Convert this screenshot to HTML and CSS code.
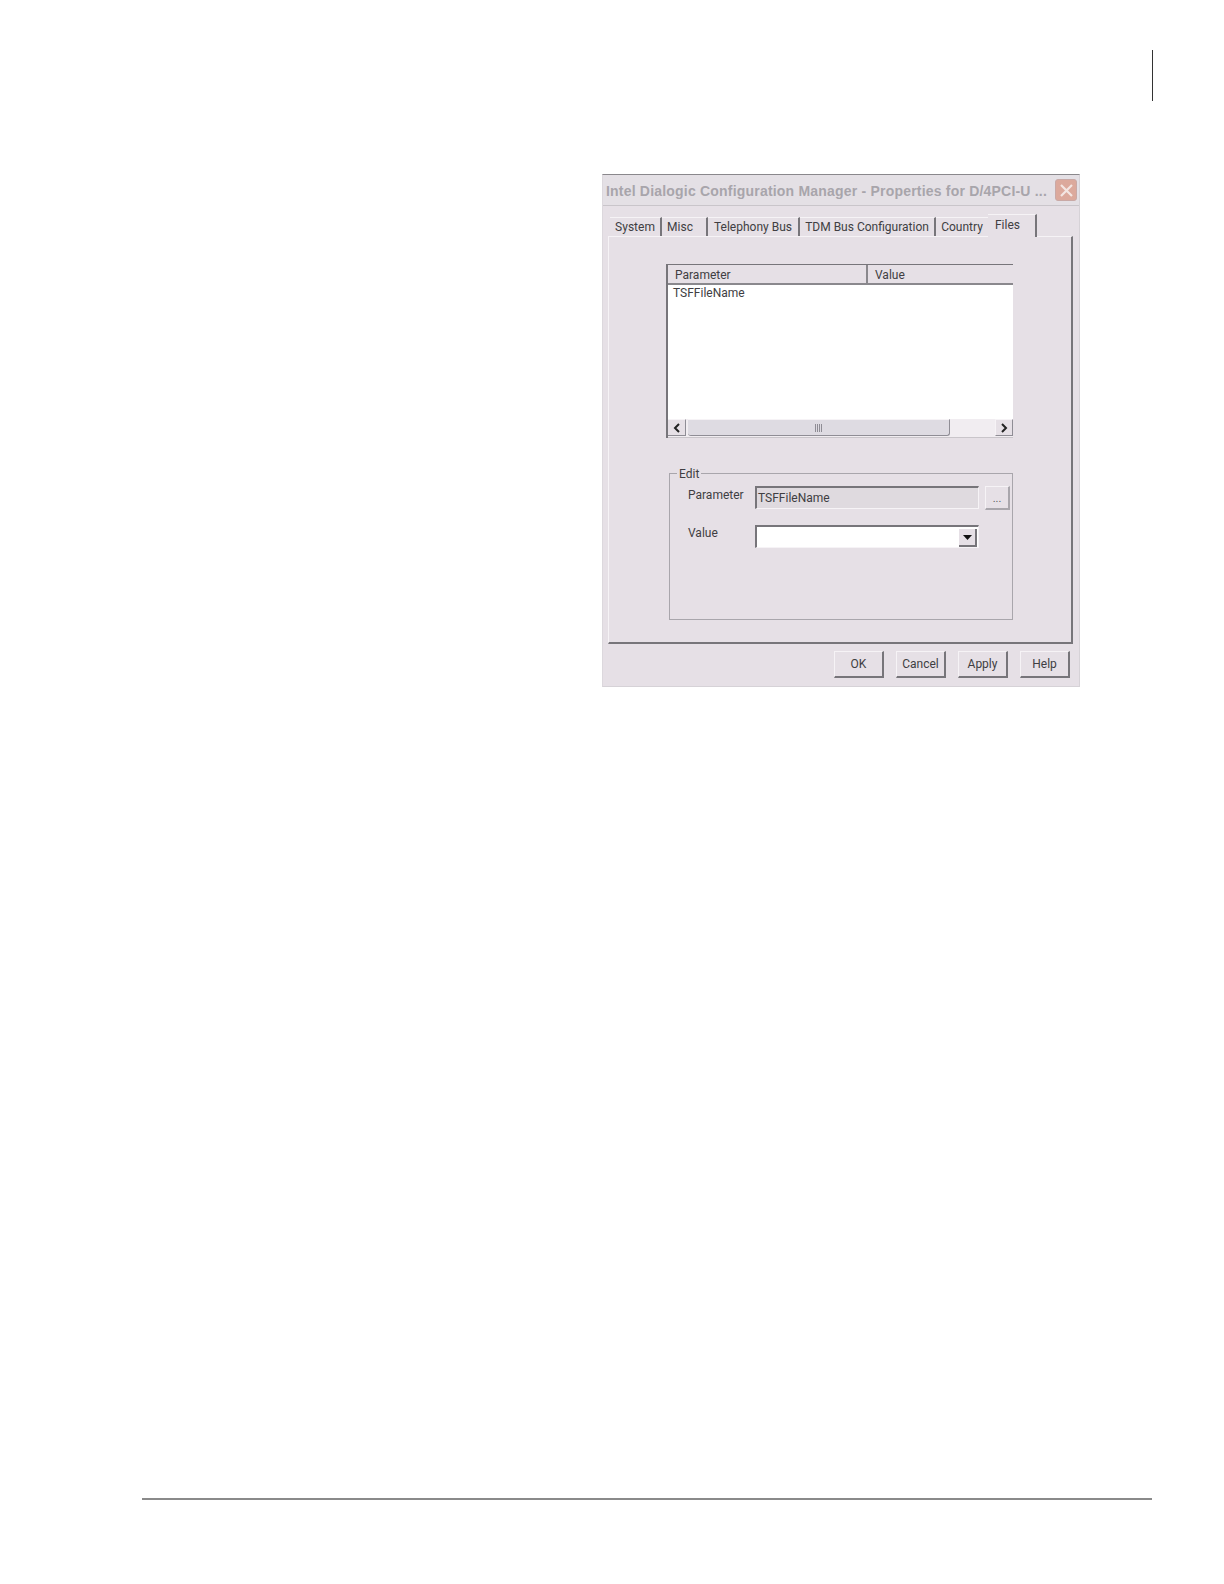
FILE: index.html
```html
<!DOCTYPE html>
<html lang="en">
<head>
    <meta charset="UTF-8">
    <meta name="viewport" content="width=device-width, initial-scale=1.0">
    <title>Properties</title>
    <link rel="stylesheet" href="styles.css">
</head>
<body>

    <div class="page-mark"></div>

    <div class="dialog">
        <div class="titlebar">
            <span class="title">Intel Dialogic Configuration Manager - Properties for D/4PCI-U ...</span>
            <div class="close">
                <svg width="15" height="15" viewBox="0 0 15 15"><path d="M2 2L13 13M13 2L2 13" stroke="#f3e6e2" stroke-width="2.2" fill="none"/></svg>
            </div>
        </div>

        <div class="tabs">
            <div class="tab tab-system">System</div>
            <div class="tab tab-misc">Misc</div>
            <div class="tab tab-bus">Telephony Bus</div>
            <div class="tab tab-tdm">TDM Bus Configuration</div>
            <div class="tab tab-country">Country</div>
            <div class="tab-active">Files</div>
        </div>

        <div class="panel">
            <div class="list">
                <div class="list-head">
                    <div class="col col-param">Parameter</div>
                    <div class="col col-value">Value</div>
                </div>
                <div class="list-body">TSFFileName</div>
                <div class="scrollbar">
                    <div class="scroll-btn">
                        <svg width="10" height="10" viewBox="0 0 10 10"><path d="M7 1L3 5L7 9" stroke="#222" stroke-width="2" fill="none"/></svg>
                    </div>
                    <div class="scroll-thumb">
                        <svg width="9" height="8" viewBox="0 0 9 8"><path d="M1.5 0V8M3.5 0V8M5.5 0V8M7.5 0V8" stroke="#8f8d95" stroke-width="1" fill="none"/></svg>
                    </div>
                    <div class="scroll-btn scroll-right">
                        <svg width="10" height="10" viewBox="0 0 10 10"><path d="M3 1L7 5L3 9" stroke="#222" stroke-width="2" fill="none"/></svg>
                    </div>
                </div>
            </div>

            <div class="group">
                <div class="legend">Edit</div>
                <div class="row">
                    <span class="label label-param">Parameter</span>
                    <div class="field field-grey">TSFFileName</div>
                    <div class="dots">...</div>
                </div>
                <div class="row row-value">
                    <span class="label label-value">Value</span>
                    <div class="field field-white">
                        <div class="drop">
                            <svg width="9" height="5" viewBox="0 0 9 5"><path d="M0 0H9L4.5 5Z" fill="#111"/></svg>
                        </div>
                    </div>
                </div>
            </div>
        </div>

        <div class="buttons">
            <div class="button">OK</div>
            <div class="button">Cancel</div>
            <div class="button">Apply</div>
            <div class="button">Help</div>
        </div>
    </div>

    <div class="page-rule"></div>

</body>
</html>
```

FILE: styles.css
```css
* {
    margin: 0;
    padding: 0;
    box-sizing: border-box;
}

body {
    font-family: Roboto, "Liberation Sans", Arial, sans-serif;
    background-color: #fff;
    color: #333;
    height: 1584px;
    overflow: hidden;
    padding-top: 50px;
}

.page-mark {
    width: 1px;
    height: 51px;
    margin-left: 1152px;
    background-color: #333;
}

.dialog {
    width: 478px;
    height: 513px;
    margin-left: 602px;
    margin-top: 73px;
    background-color: #e6e0e6;
    border-top: 1px solid #8a888c;
    border-left: 1px solid #dcd8dd;
    border-right: 1px solid #d6d2d7;
    border-bottom: 1px solid #d6d2d7;
    font-size: 12px;
    line-height: 15px;
    color: #403e42;
}

.titlebar {
    height: 31px;
    display: flex;
    align-items: center;
    justify-content: space-between;
    padding: 2px 2px 0 3px;
    background-color: #e4e0e5;
    border-bottom: 1px solid #c9c5ca;
}

.title {
    font-family: "Liberation Sans", Arial, sans-serif;
    font-weight: bold;
    font-size: 14px;
    color: #a8a5ab;
    white-space: nowrap;
    letter-spacing: 0.2px;
}

.close {
    width: 22px;
    height: 22px;
    margin-top: -2px;
    flex-shrink: 0;
    display: flex;
    align-items: center;
    justify-content: center;
    background-color: #dca99c;
    border: 1px solid #c9a9a6;
    border-radius: 3px;
}

.tabs {
    display: flex;
    height: 30px;
    padding: 11px 0 0 7px;
}

.tab {
    height: 19px;
    padding-top: 2px;
    text-align: center;
    white-space: nowrap;
    border-right: 2px solid #77757a;
    border-top: 1px solid #f6f3f6;
}

.tab-system { width: 52px; }
.tab-misc { width: 46px; padding-right: 8px; }
.tab-bus { width: 92px; }
.tab-tdm { width: 136px; }
.tab-country { width: 52px; border-right: none; }

.tab-active {
    width: 49px;
    height: 23px;
    margin-top: -3px;
    padding-top: 3px;
    padding-right: 8px;
    text-align: center;
    background-color: #e6e0e6;
    border-top: 1px solid #f6f3f6;
    border-right: 2px solid #77757a;
    position: relative;
    z-index: 1;
}

.panel {
    width: 465px;
    height: 408px;
    margin-left: 5px;
    padding: 27px 0 0 57px;
    border-top: 1px solid #f6f3f6;
    border-left: 1px solid #f6f3f6;
    border-right: 2px solid #77757a;
    border-bottom: 2px solid #77757a;
}

.list {
    width: 347px;
    height: 174px;
    background-color: #fff;
    border-top: 1px solid #77757a;
    border-left: 2px solid #77757a;
    display: flex;
    flex-direction: column;
}

.list-head {
    display: flex;
    height: 20px;
    background-color: #e6e0e6;
    border-bottom: 2px solid #8a888d;
}

.col {
    padding: 3px 0 0 7px;
}

.col-param {
    width: 200px;
    border-right: 2px solid #8a888d;
}

.list-body {
    flex: 1;
    padding: 1px 0 0 5px;
}

.scrollbar {
    display: flex;
    height: 19px;
    padding-bottom: 1px;
    background-color: #f1edf1;
    border-bottom: 1px solid #c9c5ca;
}

.scroll-btn {
    width: 18px;
    display: flex;
    align-items: center;
    justify-content: center;
    background-color: #e6e0e6;
    border-top: 1px solid #f6f3f6;
    border-right: 1px solid #8f8d95;
    border-bottom: 1px solid #8f8d95;
}

.scroll-right {
    margin-left: auto;
    border-left: 1px solid #f6f3f6;
}

.scroll-thumb {
    width: 262px;
    margin-left: 2px;
    display: flex;
    align-items: center;
    justify-content: center;
    background-color: #dedbe2;
    border-top: 1px solid #f6f3f6;
    border-right: 1px solid #8f8d95;
    border-bottom: 1px solid #8f8d95;
    border-radius: 0 0 3px 3px;
}

.group {
    width: 344px;
    height: 147px;
    margin-top: 35px;
    margin-left: 3px;
    padding: 12px 0 0 18px;
    border: 1px solid #a9a6ac;
    position: relative;
}

.legend {
    position: absolute;
    top: -7px;
    left: 7px;
    padding: 0 2px;
    background-color: #e6e0e6;
}

.row {
    display: flex;
}

.label {
    width: 67px;
    flex-shrink: 0;
}

.label-param {
    margin-top: 2px;
}

.label-value {
    margin-top: 1px;
}

.row-value {
    margin-top: 15px;
}

.field {
    width: 224px;
    height: 23px;
    border-top: 2px solid #77757a;
    border-left: 2px solid #77757a;
    border-right: 1px solid #f6f3f6;
    border-bottom: 1px solid #f6f3f6;
}

.field-grey {
    padding: 3px 0 0 1px;
    background-color: #dfdadf;
}

.field-white {
    background-color: #fff;
    display: flex;
    justify-content: flex-end;
    align-items: flex-end;
}

.drop {
    width: 18px;
    height: 18px;
    margin-right: 1px;
    display: flex;
    align-items: center;
    justify-content: center;
    background-color: #e6e0e6;
    border-right: 2px solid #77757a;
    border-bottom: 2px solid #77757a;
}

.dots {
    width: 25px;
    height: 24px;
    margin-left: 6px;
    text-align: center;
    padding-top: 4px;
    font-size: 11px;
    color: #5f5d62;
    border-right: 2px solid #a9a6ac;
    border-bottom: 2px solid #a9a6ac;
    border-top: 1px solid #f6f3f6;
    border-left: 1px solid #f6f3f6;
}

.buttons {
    display: flex;
    gap: 12px;
    padding: 7px 0 0 231px;
}

.button {
    width: 50px;
    height: 27px;
    text-align: center;
    padding-top: 5px;
    border-top: 1px solid #f6f3f6;
    border-left: 1px solid #f6f3f6;
    border-right: 2px solid #77757a;
    border-bottom: 2px solid #77757a;
}

.page-rule {
    width: 1010px;
    height: 2px;
    margin-left: 142px;
    margin-top: 811px;
    background-color: #8a8a8a;
}
```
